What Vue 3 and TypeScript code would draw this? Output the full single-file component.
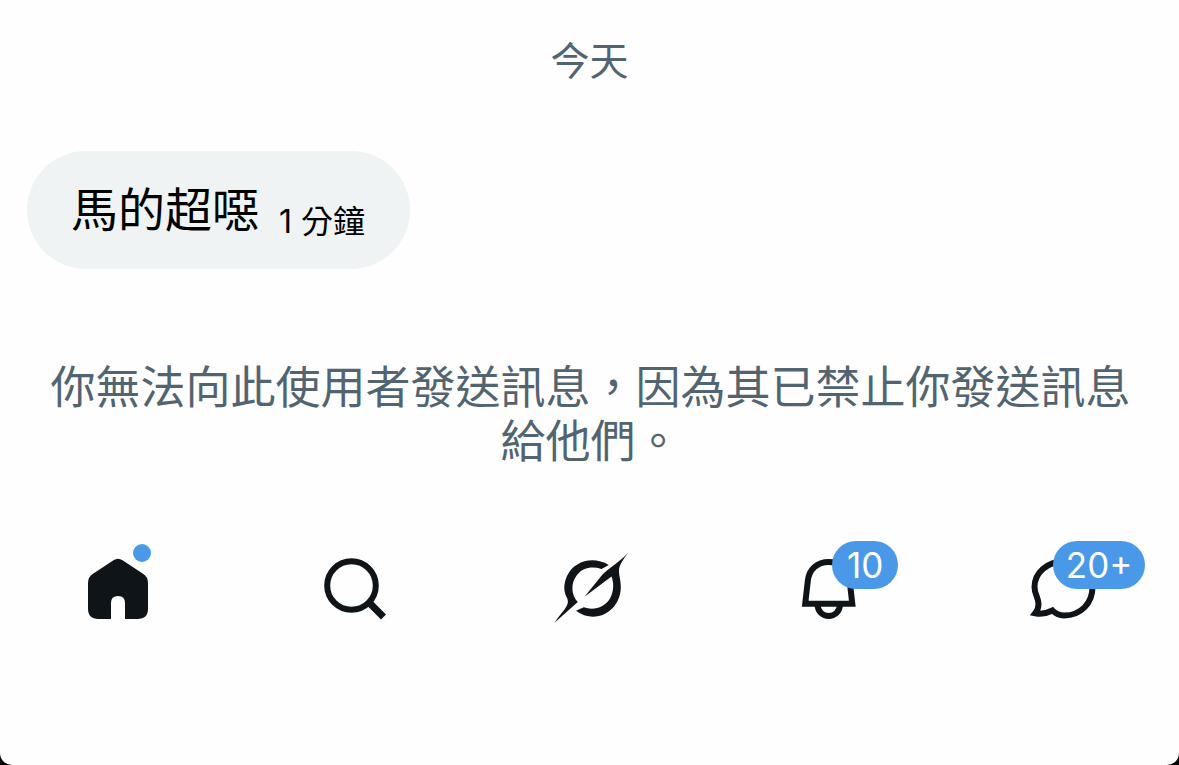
<script setup lang="ts">
import { ref } from 'vue'

type TabId = 'home' | 'search' | 'grok' | 'alerts' | 'chat'

interface Tab {
  id: TabId
  label: string
  badge?: string
  dot?: boolean
}

const tabs: Tab[] = [
  { id: 'home', label: '首頁', dot: true },
  { id: 'search', label: '搜尋' },
  { id: 'grok', label: 'Grok' },
  { id: 'alerts', label: '通知', badge: '10' },
  { id: 'chat', label: '訊息', badge: '20+' },
]

const active = ref<TabId>('home')
</script>

<template>
  <div class="screen">
    <main class="thread">
      <p class="date">今天</p>
      <div class="bubble">
        <span class="message">馬的超噁</span>
        <time class="time">1 分鐘</time>
      </div>
      <p class="notice">你無法向此使用者發送訊息，因為其已禁止你發送訊息給他們。</p>
    </main>

    <nav class="tabs">
      <button
        v-for="tab in tabs"
        :key="tab.id"
        type="button"
        class="tab"
        :aria-label="tab.label"
        :aria-pressed="active === tab.id"
        @click="active = tab.id"
      >
        <span class="icon">
          <svg v-if="tab.id === 'home'" viewBox="0 0 80 80" aria-hidden="true">
            <path
              class="fill"
              d="M35.500 12.300 Q40 9.300 44.500 12.300 L65 25.800 Q70 29 70 35 V60.500 Q70 71 59.500 71 H47 V55 Q47 48 40 48 Q33 48 33 55 V71 H20.500 Q10 71 10 60.500 V35 Q10 29 15 25.800 Z"
            />
          </svg>
          <svg v-else-if="tab.id === 'search'" viewBox="0 0 80 80" aria-hidden="true">
            <circle class="line" cx="37.500" cy="37.500" r="24.300" />
            <path class="line handle" d="M54.500 54 L69.500 69" />
          </svg>
          <svg v-else-if="tab.id === 'grok'" viewBox="-1 0 80 80" aria-hidden="true">
            <path
              class="fill"
              d="M58.800 17 C43 7.500 24 13 17 28 C13 37 13.800 44 17 50 C19 54 17.500 57 14.800 61 C12 65 8 69 4.500 74.700 L27.800 54 C21 47 20.500 35 27 27 C33 19.500 42 18 51.500 21 Z"
            />
            <path
              class="fill"
              d="M34.500 48.700 L52.500 26.500 C60 19 70 14 78.500 4.300 C73 12 69 17 69 23 C69 28 70.800 32 70.800 39 C70.800 56 58 68.700 43 68.700 C37 68.700 31 66.500 26 62.700 L33.800 59.300 C44 63 55 59 60 50.500 C64 43 64 35 61.500 28.500 Z"
            />
          </svg>
          <svg v-else-if="tab.id === 'alerts'" viewBox="0 0 80 80" aria-hidden="true">
            <path
              class="line"
              d="M20.200 55.800 L22.800 33 C24 21 32.500 14 43.700 14 C55 14 63.500 21 64.700 33 L67.300 55.800 Z"
            />
            <path class="line" d="M32.500 57 C33 64 38 68 43.700 68 C49.500 68 54.500 64 55 57" />
          </svg>
          <svg v-else viewBox="-1 0 80 80" aria-hidden="true">
            <path
              class="line"
              d="M42 13.500 C25 13.500 12.500 25 12.500 39 C12.500 46 16.500 50 16.500 56 C16.500 60 15.500 62.500 13.300 65.200 C20 66.500 25.500 65 30.500 62.500 C34 66 38 67.500 42 67.500 C59 67.500 70.500 55 70.500 39 C70.500 25 59 13.500 42 13.500 Z"
            />
          </svg>
          <span v-if="tab.dot" class="dot"></span>
          <span v-if="tab.badge" class="badge" :class="{ wide: tab.badge.length > 2 }">{{ tab.badge }}</span>
        </span>
      </button>
    </nav>
  </div>
</template>

<style>
html {
  background: #000;
}
body {
  margin: 0;
}
</style>

<style scoped>
.screen {
  box-sizing: border-box;
  min-height: 100vh;
  display: flex;
  flex-direction: column;
  background: #fefefe;
  border-radius: 0 0 12px 12px;
  font-family: Inter, 'Noto Sans CJK TC', sans-serif;
  color: #000;
}
.thread {
  display: flex;
  flex-direction: column;
  padding: 34px 27px 0;
}
.date {
  margin: 0;
  text-align: center;
  font-size: 39px;
  line-height: 54px;
  color: #536471;
}
.bubble {
  align-self: flex-start;
  display: flex;
  align-items: center;
  gap: 20px;
  margin-top: 63px;
  padding: 23px 45px 23px 44px;
  border-radius: 60px;
  background: #eff3f4;
}
.message {
  font-size: 47px;
  line-height: 72px;
}
.time {
  padding-top: 24px;
  font-size: 32px;
  line-height: 48px;
}
.notice {
  margin: 92px 0 0;
  padding: 0 20px 0 22px;
  text-align: center;
  font-size: 45px;
  line-height: 54px;
  color: #536471;
}
.tabs {
  display: grid;
  grid-template-columns: repeat(5, 1fr);
  margin-top: 79px;
}
.tab {
  display: flex;
  justify-content: center;
  padding: 0;
  border: 0;
  background: none;
  cursor: pointer;
}
.icon {
  position: relative;
  width: 80px;
  height: 80px;
}
.icon svg {
  display: block;
  width: 80px;
  height: 80px;
}
.fill {
  fill: #0f1419;
}
.line {
  fill: none;
  stroke: #0f1419;
  stroke-width: 6;
}
.handle {
  stroke-width: 7;
}
.dot {
  position: absolute;
  top: -4px;
  left: 55px;
  width: 18px;
  height: 18px;
  border-radius: 50%;
  background: #4a99e9;
}
.badge {
  position: absolute;
  top: -7px;
  left: 47px;
  box-sizing: border-box;
  min-width: 66px;
  padding: 0 12px;
  border-radius: 24px;
  background: #4a99e9;
  color: #fff;
  font-family: Inter, sans-serif;
  font-size: 35px;
  line-height: 48px;
  text-align: center;
}
.badge.wide {
  left: 32px;
  min-width: 92px;
}
</style>
